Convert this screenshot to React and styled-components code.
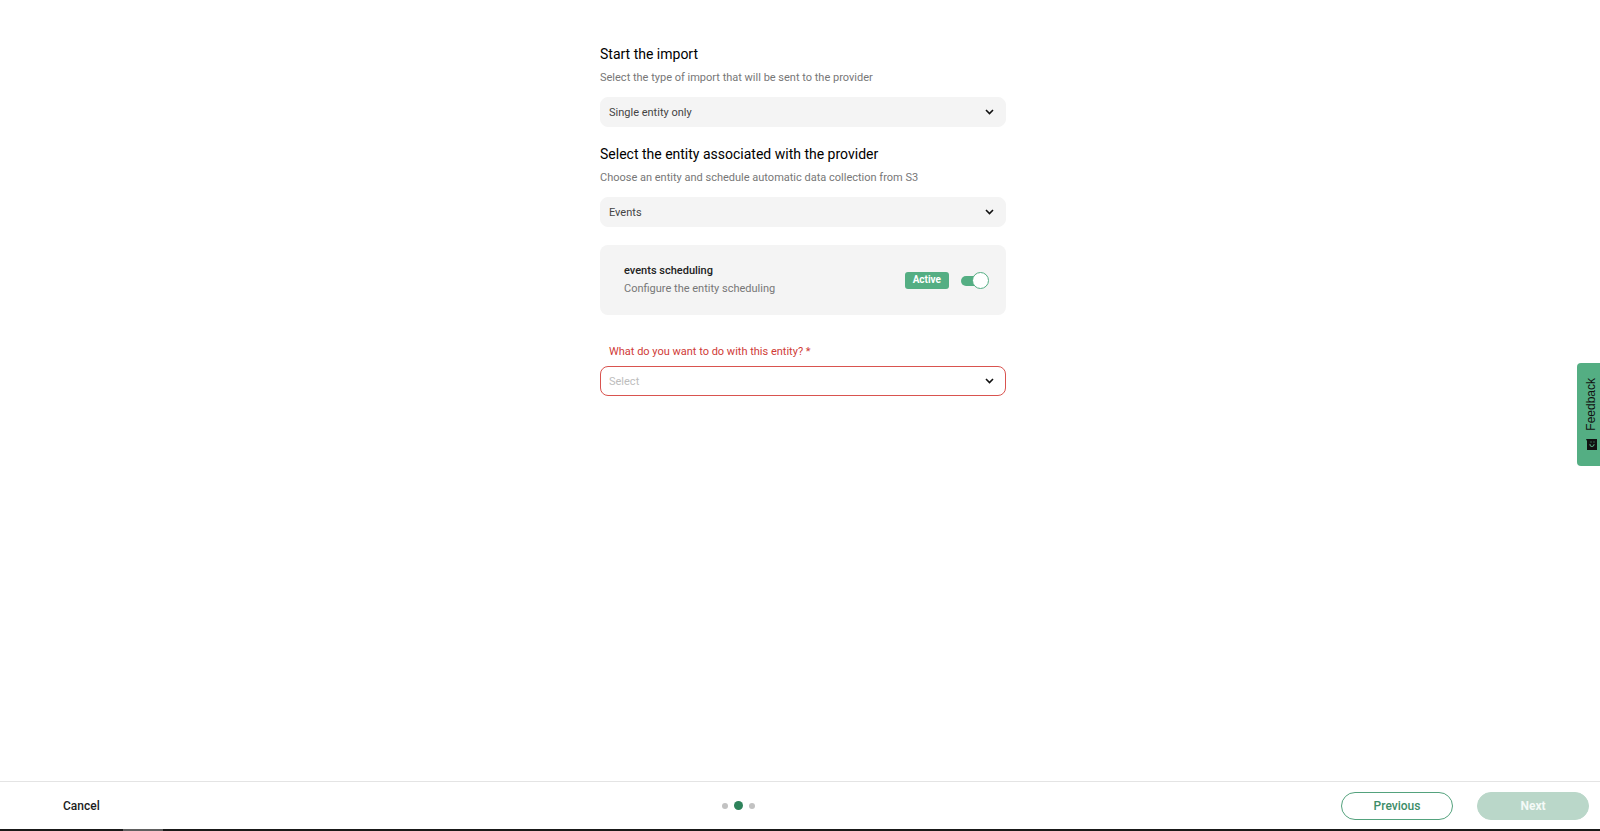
import React from "react";
import styled, { createGlobalStyle } from "styled-components";

const GlobalStyle = createGlobalStyle`
  *, *::before, *::after { box-sizing: border-box; }
  html, body { margin: 0; padding: 0; background: #fff; }
  body, button, select, input { font-family: Roboto, "Liberation Sans", sans-serif; }
`;

const Page = styled.div`
  min-height: 100vh;
  display: flex;
  flex-direction: column;
  color: #1c1c1c;
`;

const Main = styled.main`
  flex: 1;
  display: flex;
  justify-content: center;
  padding: 45px 16px 40px 22px;
`;

const Form = styled.form`
  width: 100%;
  max-width: 406px;
`;

const Section = styled.section`
  margin-bottom: 18px;
`;

const Title = styled.h2`
  margin: 0;
  font-size: 14px;
  line-height: 19px;
  font-weight: 400;
  color: #000;
`;

const Hint = styled.p`
  margin: 5px 0 10px;
  font-size: 11px;
  line-height: 18px;
  color: #777;
`;

const SelectWrap = styled.div`
  position: relative;
`;

const Select = styled.select`
  appearance: none;
  display: block;
  width: 100%;
  height: 30px;
  padding: 0 36px 0 8px;
  border: 1px solid ${(p) => (p.$invalid ? "#d9534f" : "#f4f4f4")};
  border-radius: 8px;
  background: ${(p) => (p.$invalid ? "#fff" : "#f4f4f4")};
  color: ${(p) => (p.$invalid ? "#bdbdbd" : "#444")};
  font-size: 11px;
  outline: none;
`;

const Arrow = styled.svg`
  position: absolute;
  right: 12px;
  top: 50%;
  width: 9px;
  height: 6px;
  margin-top: -3px;
  pointer-events: none;
`;

const Card = styled.section`
  display: flex;
  align-items: center;
  height: 70px;
  padding: 0 17px 0 24px;
  border-radius: 8px;
  background: #f4f4f4;
`;

const CardText = styled.div`
  flex: 1;
  font-size: 11px;
  line-height: 18px;
  color: #777;
`;

const CardTitle = styled.label`
  display: block;
  font-weight: 500;
  color: #222;
`;

const Badge = styled.span`
  height: 17px;
  padding: 0 8px;
  border-radius: 3px;
  background: #54ae83;
  color: #fff;
  font-size: 10px;
  line-height: 15px;
  font-weight: 700;
`;

const Toggle = styled.input`
  appearance: none;
  position: relative;
  width: 28px;
  height: 17px;
  margin: 0 0 0 12px;
  cursor: pointer;

  &::before {
    content: "";
    position: absolute;
    left: 0;
    top: 4px;
    width: 24px;
    height: 10px;
    border-radius: 5px;
    background: #bdbdbd;
  }
  &::after {
    content: "";
    position: absolute;
    left: 0;
    top: 0;
    width: 17px;
    height: 17px;
    border: 1px solid #54ae83;
    border-radius: 50%;
    background: #fff;
  }
  &:checked::before { background: #54ae83; }
  &:checked::after { left: 11px; }
`;

const FieldLabel = styled.label`
  display: block;
  margin: 28px 0 5px 9px;
  font-size: 11px;
  line-height: 18px;
  color: #d03b37;
`;

const Feedback = styled.button`
  position: fixed;
  right: 0;
  top: 363px;
  display: flex;
  align-items: center;
  gap: 8px;
  height: 103px;
  width: 23px;
  padding: 15px 0 0 5px;
  border: 0;
  border-radius: 4px 0 0 4px;
  background: #54ae83;
  color: #111;
  font-family: "Liberation Sans", Arial, sans-serif;
  font-size: 12px;
  line-height: 18px;
  writing-mode: vertical-rl;
  cursor: pointer;
`;

const FeedbackText = styled.span`
  writing-mode: sideways-lr;
`;

const Footer = styled.footer`
  display: grid;
  grid-template-columns: 1fr auto 1fr;
  align-items: center;
  height: 48px;
  padding: 0 11px 0 63px;
  border-top: 1px solid #e4e4e4;
`;

const CancelButton = styled.button`
  justify-self: start;
  padding: 0;
  border: 0;
  background: none;
  color: #1c1c1c;
  font-size: 12px;
  font-weight: 500;
  cursor: pointer;
`;

const Dots = styled.div`
  display: flex;
  align-items: center;
  gap: 6px;
  margin-right: 176px;
`;

const Dot = styled.span`
  width: ${(p) => (p.$current ? 9 : 6)}px;
  height: ${(p) => (p.$current ? 9 : 6)}px;
  border-radius: 50%;
  background: ${(p) => (p.$current ? "#2e835b" : "#c2c2c2")};
`;

const Actions = styled.div`
  justify-self: end;
  display: flex;
  gap: 24px;
`;

const ActionButton = styled.button`
  width: 112px;
  height: 28px;
  border: 1px solid ${(p) => (p.$primary ? "#bad7c9" : "#54a27d")};
  border-radius: 14px;
  background: ${(p) => (p.$primary ? "#bad7c9" : "#fff")};
  color: ${(p) => (p.$primary ? "#f4faf7" : "#3d8d68")};
  font-size: 12px;
  font-weight: ${(p) => (p.$primary ? 700 : 500)};
  cursor: pointer;
`;

const BottomEdge = styled.div`
  display: flex;
  height: 2px;
  padding-left: 123px;
  background: #191919;
`;

const EdgeTab = styled.span`
  width: 40px;
  background: #606060;
`;

function Dropdown({ id, label, options, invalid }) {
  return (
    <SelectWrap>
      <Select id={id} aria-label={label} $invalid={invalid} aria-invalid={invalid}>
        {options.map((o) => (
          <option key={o}>{o}</option>
        ))}
      </Select>
      <Arrow viewBox="0 0 9 6" aria-hidden="true">
        <path d="M1 1 L4.5 4.5 L8 1" fill="none" stroke="#111" strokeWidth="1.6" />
      </Arrow>
    </SelectWrap>
  );
}

export default function App() {
  return (
    <>
      <GlobalStyle />
      <Page>
        <Main>
          <Form>
            <Section>
              <Title>Start the import</Title>
              <Hint>Select the type of import that will be sent to the provider</Hint>
              <Dropdown id="type" label="Start the import" options={["Single entity only"]} />
            </Section>
            <Section>
              <Title>Select the entity associated with the provider</Title>
              <Hint>Choose an entity and schedule automatic data collection from S3</Hint>
              <Dropdown id="entity" label="Select the entity" options={["Events"]} />
            </Section>
            <Card>
              <CardText>
                <CardTitle htmlFor="scheduling">events scheduling</CardTitle>
                Configure the entity scheduling
              </CardText>
              <Badge>Active</Badge>
              <Toggle id="scheduling" type="checkbox" role="switch" defaultChecked />
            </Card>
            <FieldLabel htmlFor="action">What do you want to do with this entity? *</FieldLabel>
            <Dropdown id="action" options={["Select"]} invalid />
          </Form>
        </Main>
        <Footer>
          <CancelButton type="button">Cancel</CancelButton>
          <Dots>
            <Dot />
            <Dot $current />
            <Dot />
          </Dots>
          <Actions>
            <ActionButton type="button">Previous</ActionButton>
            <ActionButton type="button" $primary>Next</ActionButton>
          </Actions>
        </Footer>
        <BottomEdge>
          <EdgeTab />
        </BottomEdge>
      </Page>
      <Feedback type="button">
        <FeedbackText>Feedback</FeedbackText>
        <svg width="11" height="11" viewBox="0 0 11 11" aria-hidden="true">
          <path d="M0 0 H11 V11 H1 V2 Z" fill="#111" />
          <path d="M4.5 3 H5.5 M7.5 3 H8.5 M4 5 V6 Q4 7.5 6 7.5 Q8 7.5 8 5.5 V5" fill="none" stroke="#54ae83" />
        </svg>
      </Feedback>
    </>
  );
}
